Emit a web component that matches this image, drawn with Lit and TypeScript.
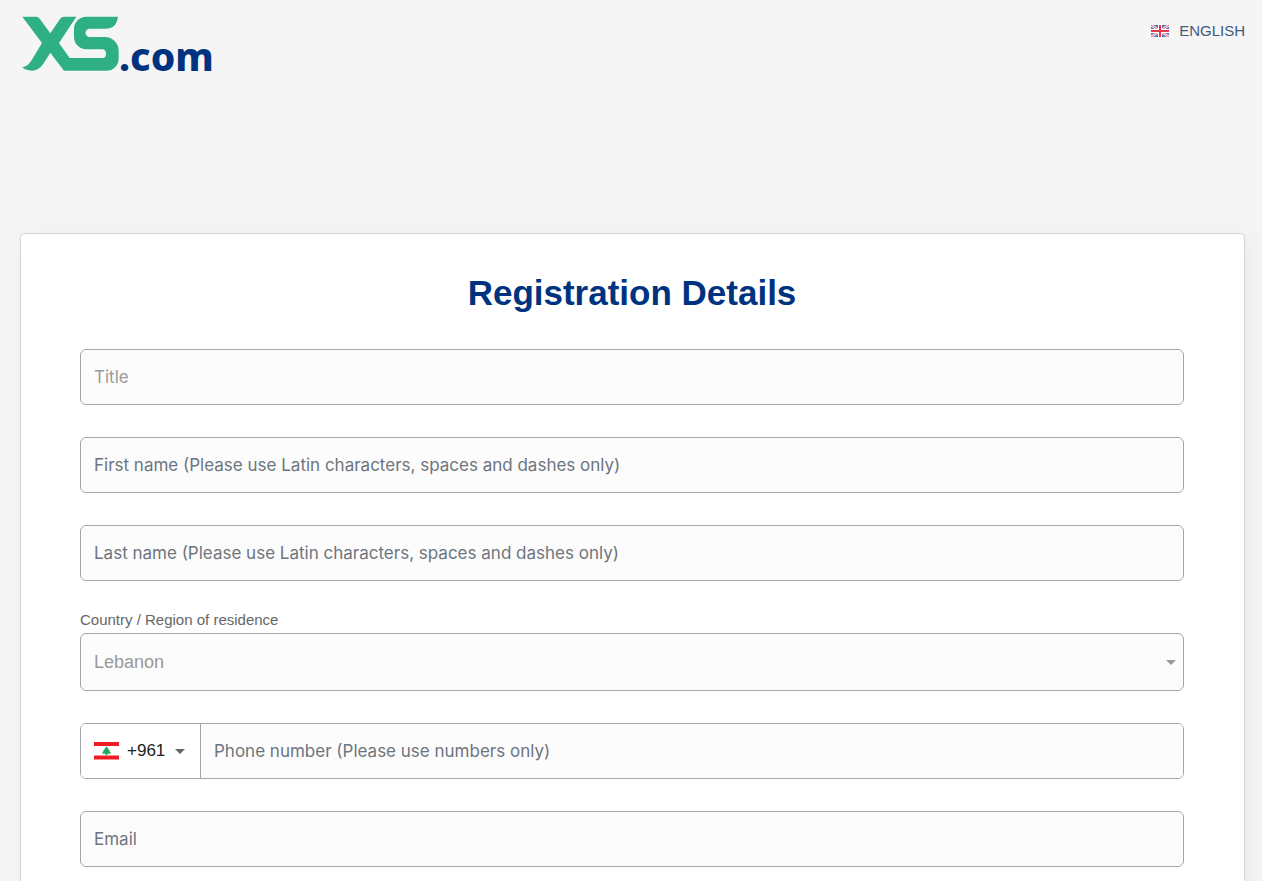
import { LitElement, html, css, svg } from "lit";
import { customElement } from "lit/decorators.js";

const caret = svg`<path d="M0 0h10L5 5z" fill="currentColor" />`;

@customElement("brand-logo")
class BrandLogo extends LitElement {
  static styles = css`
    :host {
      display: block;
    }
    .logo {
      display: flex;
      align-items: flex-end;
      color: #00337f;
      text-decoration: none;
    }
    .mark {
      display: block;
      width: 97px;
      height: 55px;
    }
    .suffix {
      font: 800 39px/30px "Noto Sans", sans-serif;
    }
  `;

  render() {
    return html`
      <a class="logo" href="#" aria-label="XS.com">
        <svg class="mark" viewBox="36 33 291 165" aria-hidden="true">
          <path
            fill="#2fb084"
            d="M37 35H78Q85 35 89 41L121 85L150 42Q155 35 163 35H199L147 114L179 159H277Q288 159 288 147Q288 133 276 133H229A37 37 0 0 1 192 95V73A37 37 0 0 1 230 35H324C321 58 309 71 287 71H239A12.500 12.500 0 0 0 239 96H284A42 42 0 0 1 326 138V161A36 36 0 0 1 290 197H162L121 143L100 176Q87 196 65 197Q48 197 37 187Q52 185 63 169L96 114Z"
          />
        </svg>
        <span class="suffix">.com</span>
      </a>
    `;
  }
}

@customElement("language-switch")
class LanguageSwitch extends LitElement {
  static styles = css`
    :host {
      display: block;
    }
    .switch {
      display: flex;
      align-items: center;
      gap: 10px;
      padding: 0;
      border: 0;
      background: none;
      color: #3d5a7d;
      font: 15px/20px "Liberation Sans", Arial, sans-serif;
      cursor: pointer;
    }
    .flag {
      display: block;
      width: 18px;
      height: 12px;
    }
  `;

  render() {
    return html`
      <button class="switch" type="button">
        <svg class="flag" viewBox="0 0 18 12" aria-hidden="true">
          <path fill="#5f74b5" d="M0 0h18v12H0z" />
          <path stroke="#fff" stroke-width="2.400" d="M0 0l18 12M18 0L0 12" />
          <path stroke="#e8556a" stroke-width="0.900" d="M0 0l18 12M18 0L0 12" />
          <path stroke="#fff" stroke-width="4" d="M9 0v12M0 6h18" />
          <path stroke="#e8384f" stroke-width="2" d="M9 0v12M0 6h18" />
        </svg>
        ENGLISH
      </button>
    `;
  }
}

@customElement("registration-form")
class RegistrationForm extends LitElement {
  static styles = css`
    :host {
      display: block;
    }
    * {
      box-sizing: border-box;
    }
    .card {
      padding: 35px 60px 60px 59px;
      border: 1px solid #d3d4e0;
      border-radius: 5px;
      background: #fff;
      box-shadow: 5px 5px 25px rgba(0, 0, 0, 0.05);
    }
    .heading {
      margin: 0 0 32px;
      color: #00337f;
      font: bold 35px/48px "Liberation Sans", Arial, sans-serif;
      text-align: center;
    }
    .fields {
      display: flex;
      flex-direction: column;
      gap: 32px;
    }
    .input,
    .select,
    .phone {
      display: block;
      width: 100%;
      height: 56px;
      border: 1px solid #a6a6a6;
      border-radius: 6px;
      background: #fcfcfc;
    }
    .input {
      padding: 0 13px;
      color: #212529;
      font: 17px/24px Inter, sans-serif;
      font-optical-sizing: none;
      outline-color: #00337f;
    }
    .input::placeholder {
      color: #6c757d;
      opacity: 1;
    }
    .muted::placeholder {
      color: #999;
    }
    .label {
      display: block;
      padding-bottom: 6px;
      color: #666;
      font: 15px/14px "Liberation Sans", Arial, sans-serif;
    }
    .picker {
      display: grid;
      align-items: center;
      color: #999;
    }
    .picker > * {
      grid-area: 1 / 1;
    }
    .select {
      height: 58px;
      padding: 0 28px 0 13px;
      color: #999;
      font: 18px/24px "Liberation Sans", Arial, sans-serif;
      appearance: none;
    }
    .caret {
      justify-self: end;
      width: 10px;
      height: 5px;
      margin-right: 8px;
      pointer-events: none;
    }
    .phone {
      display: flex;
      overflow: hidden;
    }
    .code {
      display: flex;
      align-items: center;
      flex: none;
      width: 120px;
      padding: 0 15px 0 13px;
      border-right: 1px solid #a6a6a6;
      background: #fff;
      color: #666;
    }
    .flag {
      flex: none;
      width: 25px;
      height: 18px;
    }
    .dial {
      display: grid;
      flex: 1;
      align-items: center;
      margin-left: 8px;
    }
    .dial > * {
      grid-area: 1 / 1;
    }
    .dial .caret {
      margin-right: 0;
    }
    .prefix {
      width: 100%;
      height: 40px;
      padding: 0;
      border: 0;
      background: none;
      color: #212121;
      font: 17px/24px "Liberation Sans", Arial, sans-serif;
      appearance: none;
    }
    .number {
      flex: 1;
      min-width: 0;
      height: 100%;
      border: 0;
      border-radius: 0;
    }
  `;

  render() {
    return html`
      <form class="card">
        <h1 class="heading">Registration Details</h1>
        <div class="fields">
          <input class="input muted" aria-label="Title" placeholder="Title" />
          <input
            class="input"
            aria-label="First name"
            placeholder="First name (Please use Latin characters, spaces and dashes only)"
          />
          <input
            class="input"
            aria-label="Last name"
            placeholder="Last name (Please use Latin characters, spaces and dashes only)"
          />
          <div>
            <label class="label" for="country">Country / Region of residence</label>
            <div class="picker">
              <select class="select" id="country">
                <option>Lebanon</option>
              </select>
              <svg class="caret" viewBox="0 0 10 5" aria-hidden="true">${caret}</svg>
            </div>
          </div>
          <div class="phone">
            <div class="code">
              <svg class="flag" viewBox="0 0 25 18" aria-hidden="true">
                <path fill="#fff" d="M0 0h25v18H0z" />
                <path fill="#ee1c25" d="M0 0h25v4H0zM0 13.500h25v4H0z" />
                <path
                  fill="#1eaa5c"
                  d="M12.500 4.500l2 2.300-.4.200 1.900 1.900-.5.300 1.700 2.300-3.900.2.300 1.300h-2.200l.3-1.300-3.900-.2 1.700-2.300-.5-.3 1.900-1.900-.4-.2z"
                />
              </svg>
              <div class="dial">
                <select class="prefix" aria-label="Country code">
                  <option>+961</option>
                </select>
                <svg class="caret" viewBox="0 0 10 5" aria-hidden="true">${caret}</svg>
              </div>
            </div>
            <input
              class="input number"
              type="tel"
              aria-label="Phone number"
              placeholder="Phone number (Please use numbers only)"
            />
          </div>
          <input class="input" type="email" aria-label="Email" placeholder="Email" />
        </div>
      </form>
    `;
  }
}

@customElement("app-root")
class AppRoot extends LitElement {
  static styles = css`
    :host {
      display: block;
      box-sizing: border-box;
      min-height: 100vh;
      background: #f5f5f5;
    }
    .header {
      display: flex;
      align-items: flex-start;
      justify-content: space-between;
      padding: 16px 17px 0 22px;
    }
    .language {
      margin-top: 5px;
    }
    .main {
      padding: 162px 17px 20px 20px;
    }
  `;

  render() {
    return html`
      <header class="header">
        <brand-logo></brand-logo>
        <language-switch class="language"></language-switch>
      </header>
      <main class="main">
        <registration-form></registration-form>
      </main>
    `;
  }
}
